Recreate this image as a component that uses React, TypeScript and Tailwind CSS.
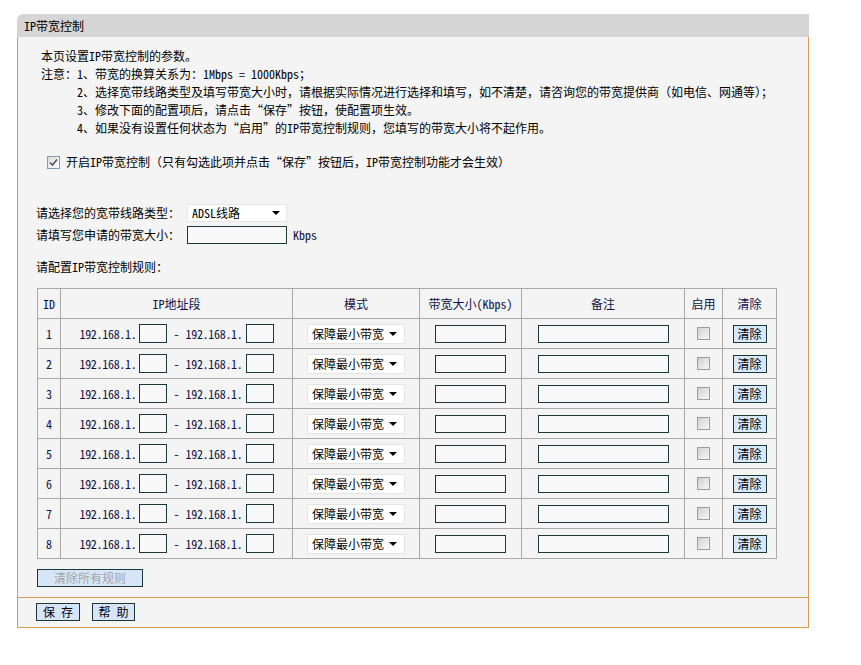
import React from 'react';

const font = "font-['Noto_Sans_Mono_CJK_SC','Noto_Sans_CJK_SC',monospace]";

function Triangle() {
  return <span className="w-0 h-0 border-l-[4px] border-r-[4px] border-t-[4px] border-l-transparent border-r-transparent border-t-black" />;
}

function Box({ w }: { w: string }) {
  return <span className={`inline-block ${w} h-[18px] border border-[#1b3838] bg-[#f8f8f8]`} />;
}

function Check() {
  return (
    <span className="inline-block w-[13px] h-[13px] border border-[#9c9c9c] bg-gradient-to-br from-[#d0d0d0] to-[#f8f8f8]" />
  );
}

function Row({ id }: { id: number }) {
  return (
    <tr className="h-[30px]">
      <td className="border border-[#a9a9a9] text-center">{id}</td>
      <td className="border border-[#a9a9a9]">
        <div className="flex items-center justify-center">
          <span className="tracking-[-0.3px]">192.168.1.</span>
          <span className="ml-[3px] inline-block w-[28px] h-[19px] border border-[#1b3838] bg-[#f8f8f8]" />
          <span className="mx-[6px]">-</span>
          <span className="tracking-[-0.3px]">192.168.1.</span>
          <span className="ml-[3px] inline-block w-[28px] h-[19px] border border-[#1b3838] bg-[#f8f8f8]" />
        </div>
      </td>
      <td className="border border-[#a9a9a9]">
        <div className="mx-auto w-[98px] h-[20px] bg-white border border-[#e4e4e4] flex items-center justify-between pl-[4px] pr-[7px] text-black">
          <span>保障最小带宽</span>
          <Triangle />
        </div>
      </td>
      <td className="border border-[#a9a9a9]">
        <div className="flex justify-center"><Box w="w-[71px]" /></div>
      </td>
      <td className="border border-[#a9a9a9]">
        <div className="flex justify-center"><Box w="w-[131px]" /></div>
      </td>
      <td className="border border-[#a9a9a9]">
        <div className="flex justify-center"><Check /></div>
      </td>
      <td className="border border-[#a9a9a9]">
        <div className="flex justify-center">
          <span className="w-[34px] h-[18px] border border-[#1b3838] bg-[#d6e8fa] text-black flex items-center justify-center">清除</span>
        </div>
      </td>
    </tr>
  );
}

export default function App() {
  const ids = [1, 2, 3, 4, 5, 6, 7, 8];
  return (
    <div className={`min-h-[665px] bg-white pt-[14px] pl-[17px] text-[12px] leading-[18px] text-black ${font}`}>
      <div className="w-[792px]">
        <div className="h-[23px] bg-[#d5d5d5] rounded-tl-[6px] pl-[7px] flex items-center">IP带宽控制</div>
        <div className="border-l border-r border-b border-[#dc9a4c] bg-[#f4f4f4]">
          <div className="pt-[10px] pl-[23px]">
            <div>本页设置IP带宽控制的参数。</div>
            <div>注意：1、带宽的换算关系为：1Mbps = 1000Kbps；</div>
            <div className="pl-[36px]">2、选择宽带线路类型及填写带宽大小时，请根据实际情况进行选择和填写，如不清楚，请咨询您的带宽提供商（如电信、网通等）；</div>
            <div className="pl-[36px]">3、修改下面的配置项后，请点击“保存”按钮，使配置项生效。</div>
            <div className="pl-[36px]">4、如果没有设置任何状态为“启用”的IP带宽控制规则，您填写的带宽大小将不起作用。</div>
          </div>
          <div className="mt-[16px] pl-[29px] flex items-center h-[18px]">
            <span className="w-[13px] h-[13px] border border-[#7f9db9] bg-gradient-to-br from-[#dcdcd6] to-[#ffffff] flex items-center justify-center">
              <svg width="9" height="9" viewBox="0 0 9 9">
                <path d="M1 4.5 L3.5 7 L8 1.5" fill="none" stroke="#4a5a6a" strokeWidth="1.6" />
              </svg>
            </span>
            <span className="ml-[6px]">开启IP带宽控制（只有勾选此项并点击“保存”按钮后，IP带宽控制功能才会生效）</span>
          </div>

          <div className="pl-[18px]">
            <div className="mt-[33px] flex items-center h-[18px]">
              <span className="w-[151px]">请选择您的宽带线路类型：</span>
              <div className="w-[100px] h-[18px] bg-white border border-[#e6e6e6] flex items-center justify-between pl-[4px] pr-[6px]">
                <span>ADSL线路</span>
                <Triangle />
              </div>
            </div>
            <div className="mt-[4px] flex items-center h-[18px]">
              <span className="w-[151px]">请填写您申请的带宽大小：</span>
              <span className="w-[100px] h-[18px] border border-[#1b3838] bg-[#f8f8f8]" />
              <span className="ml-[6px] text-[#111133]">Kbps</span>
            </div>
            <div className="mt-[14px]">请配置IP带宽控制规则：</div>
            <table className="mt-[12px] ml-[1px] border-collapse border border-[#a9a9a9] text-[#101048] table-fixed w-[739px]">
              <colgroup>
                <col className="w-[23px]" />
                <col className="w-[232px]" />
                <col className="w-[127px]" />
                <col className="w-[102px]" />
                <col className="w-[163px]" />
                <col className="w-[38px]" />
                <col className="w-[54px]" />
              </colgroup>
              <thead>
                <tr className="h-[30px]">
                  <th className="border border-[#a9a9a9] font-normal">ID</th>
                  <th className="border border-[#a9a9a9] font-normal">IP地址段</th>
                  <th className="border border-[#a9a9a9] font-normal">模式</th>
                  <th className="border border-[#a9a9a9] font-normal">带宽大小(Kbps)</th>
                  <th className="border border-[#a9a9a9] font-normal">备注</th>
                  <th className="border border-[#a9a9a9] font-normal">启用</th>
                  <th className="border border-[#a9a9a9] font-normal">清除</th>
                </tr>
              </thead>
              <tbody>
                {ids.map((id) => (
                  <Row key={id} id={id} />
                ))}
              </tbody>
            </table>
            <div className="mt-[10px] ml-[1px] w-[106px] h-[18px] border border-[#1b3838] bg-[#d6e6f8] text-[#a4a4a4] flex items-center justify-center">
              清除所有规则
            </div>
          </div>
          <div className="mt-[10px] border-b border-[#dc9a4c]" />
          <div className="pt-[5px] pb-[6px] pl-[18px] flex gap-[12px]">
            <span className="w-[44px] h-[18px] border border-[#1b3838] bg-[#d6e6f8] flex items-center justify-center">保 存</span>
            <span className="w-[43px] h-[18px] border border-[#1b3838] bg-[#d6e6f8] flex items-center justify-center">帮 助</span>
          </div>
        </div>
      </div>
    </div>
  );
}
